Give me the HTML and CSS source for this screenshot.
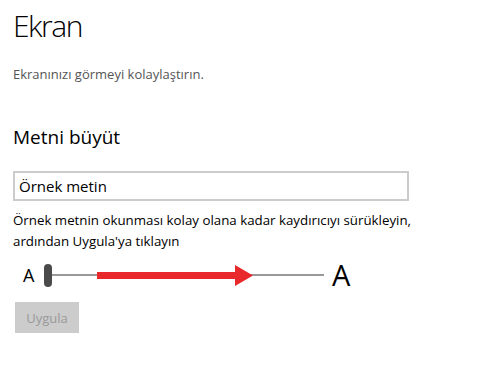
FILE: index.html
```html
<!DOCTYPE html>
<html lang="tr">
<head>
  <meta charset="UTF-8">
  <title>Ekran</title>
  <link rel="stylesheet" href="styles.css">
</head>
<body>
  <div class="page">
    <h1 class="title">Ekran</h1>
    <p class="subtitle">Ekranınızı görmeyi kolaylaştırın.</p>

    <h2 class="section">Metni büyüt</h2>
    <div class="sample">Örnek metin</div>
    <p class="hint">Örnek metnin okunması kolay olana kadar kaydırıcıyı sürükleyin,<br>ardından Uygula'ya tıklayın</p>

    <div class="slider-row">
      <span class="a-small">A</span>
      <div class="slider">
        <div class="thumb"></div>
        <div class="track"></div>
        <!-- red arrow drawn over the track -->
        <svg class="arrow" width="157" height="21" viewBox="0 0 157 21">
          <rect x="0" y="7" width="140" height="7" fill="#e8282b"/>
          <polygon points="138,0 156,10.5 138,21" fill="#e8282b"/>
        </svg>
      </div>
      <span class="a-big">A</span>
    </div>

    <button class="apply" disabled>Uygula</button>
  </div>
</body>
</html>
```

FILE: styles.css
```css
body {
  margin: 0;
  background: #fff;
  font-family: "Open Sans", "Noto Sans", sans-serif;
  color: #000;
}

.page {
  padding: 6px 0 0 13px;
}

.title {
  margin: 0;
  font-size: 30px;
  font-weight: 300;
  letter-spacing: -1.5px;
  line-height: 40px;
}

.subtitle {
  margin: 20px 0 0;
  font-size: 13px;
  color: #555;
  line-height: 16px;
}

.section {
  margin: 42px 0 0;
  font-size: 19px;
  font-weight: 400;
  line-height: 26px;
}

.sample {
  margin-top: 21px;
  width: 388px;
  height: 26px;
  border: 2px solid #ccc;
  padding-left: 4px;
  font-size: 15px;
  line-height: 26px;
}

.hint {
  margin: 9px 0 0;
  font-size: 13.3px;
  line-height: 21px;
}

.slider-row {
  display: flex;
  align-items: center;
  margin-top: 10px;
  height: 26px;
}

.a-small {
  width: 31px;
  padding-left: 10px;
  box-sizing: border-box;
  font-size: 18px;
}

.slider {
  position: relative;
  display: flex;
  align-items: center;
  width: 280px;
}

.thumb {
  width: 8px;
  height: 23px;
  border-radius: 4px;
  background: #4a4a4a;
}

.track {
  flex: 1;
  height: 2px;
  background: #999;
}

.arrow {
  position: absolute;
  left: 53px;
  top: 50%;
  margin-top: -10.5px;
}

.a-big {
  margin-left: 8px;
  font-size: 29px;
  line-height: 26px;
}

.apply {
  display: block;
  margin: 14px 0 0 2px;
  width: 64px;
  height: 31px;
  border: none;
  background: #ccc;
  color: #999;
  font-family: inherit;
  font-size: 13px;
}
```
